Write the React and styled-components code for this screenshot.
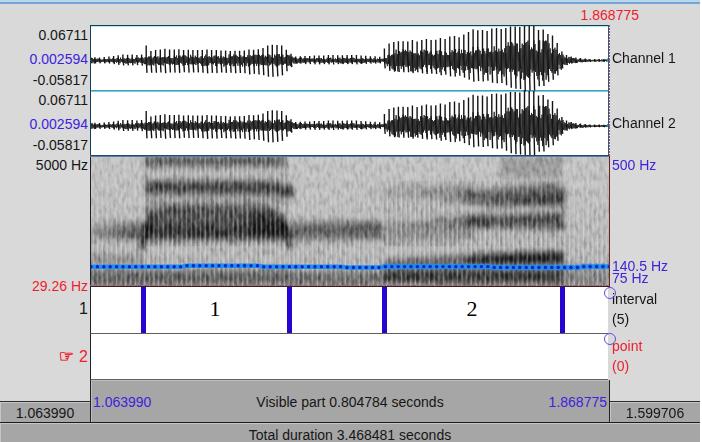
import React from 'react';
import styled, { createGlobalStyle } from 'styled-components';

const BLUE = '#3f22dc';
const RED = '#f01c2c';
const INK = '#161616';

const GlobalStyle = createGlobalStyle`
  body {
    margin: 0;
    background: #fff;
    font-family: 'Liberation Sans', Arial, sans-serif;
    font-size: 14px;
    color: ${INK};
  }
`;

const Window = styled.div`
  width: 700px;
  height: 442px;
  display: flex;
  flex-direction: column;
  overflow: hidden;
  background: #d9d9d9;
`;

const TitleEdge = styled.div`
  box-sizing: border-box;
  height: 4px;
  flex: none;
  background: #b9d6ef;
  border-bottom: 2px solid #76a5d4;
`;

const Header = styled.div`
  height: 21px;
  flex: none;
  display: flex;
  justify-content: flex-end;
  padding-right: 61px;
  line-height: 22px;
  color: ${RED};
`;

const Body = styled.div`
  display: grid;
  grid-template-columns: 90px 520px 90px;
  grid-template-rows: 398px;
  height: 398px;
  flex: none;
`;

const Side = styled.div`
  display: flex;
  flex-direction: column;
  text-align: ${p => p.right ? 'left' : 'right'};
  position: relative;
  z-index: 1;
`;

const Labels = styled.div`
  flex: 1;
  min-height: 0;
  padding: ${p => p.right ? '0 0 0 2px' : '0 2px 0 0'};
`;

const Label = styled.div`
  height: 10px;
  line-height: 10px;
  margin-top: ${p => p.gap}px;
  color: ${p => p.c || INK};
  font-size: ${p => p.big ? 16 : 14}px;
  white-space: nowrap;
`;

const Hand = styled.span`
  font-family: 'DejaVu Sans', sans-serif;
  font-size: 17px;
  line-height: 10px;
  margin-right: 5px;
  -webkit-text-stroke: 0.5px ${RED};
`;

const TimeBox = styled.div`
  box-sizing: border-box;
  height: 22px;
  flex: none;
  background: #a6a6a6;
  border-top: 1px solid #2c2c2c;
  border-bottom: 1px solid #1c1c1c;
  box-shadow: inset 1px 1px 0 #c6c6c6;
  line-height: 22px;
  text-align: center;
`;

const Plots = styled.div`
  display: flex;
  flex-direction: column;
`;

const Wave = styled.div`
  height: 131px;
  flex: none;
  background: #fff;

  svg { display: block; }
`;

const Spectrum = styled.div`
  height: 131px;
  flex: none;

  svg { display: block; }
`;

const Tier = styled.div`
  box-sizing: border-box;
  height: ${p => p.h}px;
  width: 518px;
  flex: none;
  display: flex;
  background: #fff;
  border-left: 1px solid #222;
  border-bottom: 1px solid #606060;
`;

const Interval = styled.div`
  box-sizing: border-box;
  width: ${p => p.w}px;
  flex: none;
  border-right: ${p => p.last ? 'none' : '5px solid #2605d2'};
  padding-right: ${p => p.last ? 0 : 3}px;
  text-align: center;
  font-family: 'Liberation Serif', 'Times New Roman', serif;
  font-size: 22px;
  line-height: 43px;
  color: #000;
`;

const Visible = styled.div`
  box-sizing: border-box;
  height: 43px;
  flex: none;
  display: grid;
  grid-template-columns: 1fr auto 1fr;
  padding: 2px 2px 0 2px;
  background: #a6a6a6;
  border-left: 1px solid #222;
  border-right: 1px solid #222;
  border-bottom: 1px solid #1c1c1c;
  box-shadow: inset 1px 1px 0 #bdbdbd;
  line-height: 40px;
`;

const Stamp = styled.span`
  color: ${BLUE};
  text-align: ${p => p.end ? 'right' : 'left'};
`;

const Total = styled.div`
  flex: 1;
  background: #a6a6a6;
  box-shadow: inset 1px 1px 0 #c6c6c6;
  line-height: 25px;
  text-align: center;
`;

const Handle = styled.span`
  position: absolute;
  box-sizing: border-box;
  left: -6px;
  top: ${p => p.y}px;
  width: 12px;
  height: 12px;
  border: 1px solid #5b4cdc;
  border-radius: 50%;
`;

// x, upper spike, lower spike, body
const ENVELOPE = [
  [0, 4, 3, 3], [10, 3, 3, 2], [18, 4, 3, 2], [30, 6, 5, 3], [50, 6, 5, 3], [53, 7, 6, 4],
  [56, 16, 13, 6], [61, 10, 13, 5], [70, 12, 13, 5], [125, 11, 13, 6],
  [142, 10, 13, 6], [170, 12, 15, 6], [180, 16, 17, 6], [190, 16, 16, 7],
  [195, 13, 13, 6], [200, 8, 8, 4], [206, 4, 3, 3], [220, 5, 4, 2.4],
  [260, 6, 4, 3], [290, 4, 3, 2], [293, 10, 7, 4], [299, 18, 11, 10],
  [310, 20, 12, 11], [340, 22, 14, 11], [360, 24, 16, 12], [372, 26, 17, 12],
  [380, 31, 21, 13], [395, 32, 22, 14], [410, 34, 24, 16],
  [420, 35, 28, 19], [432, 36, 31, 20], [445, 35, 30, 20], [455, 31, 25, 19],
  [463, 26, 20, 13], [468, 17, 15, 9], [472, 9, 8, 6], [478, 5, 4, 3],
  [487, 3, 2, 2], [500, 1.6, 1.4, 1], [519, 1.2, 1, 1],
];

const PERIOD = 4.67;

const rand = n => {
  const s = Math.sin(n * 12.9898 + 4.1) * 43758.5453;
  return s - Math.floor(s);
};

const envelopeAt = x => {
  let i = 0;
  while (i < ENVELOPE.length - 2 && ENVELOPE[i + 1][0] < x) i++;
  const a = ENVELOPE[i];
  const b = ENVELOPE[i + 1];
  const t = Math.min(1, Math.max(0, (x - a[0]) / (b[0] - a[0])));
  return [1, 2, 3].map(k => a[k] + (b[k] - a[k]) * t);
};

const bodyPts = [];
const spikes = [];
for (let n = 0; n * PERIOD < 516; n++) {
  const x0 = n * PERIOD + 0.2;
  const [up, down, body] = envelopeAt(x0);
  const j = 0.9 + rand(n) * 0.1;
  for (let k = 0; k < 8; k++) {
    const amp = body * (0.4 + rand(n * 8 + k) * 0.65) * (k % 2 ? 1 : -1);
    bodyPts.push(`${(x0 + k * PERIOD / 8).toFixed(1)} ${amp.toFixed(1)}`);
  }
  spikes.push(`M${x0.toFixed(1)} 1V${(-up * j).toFixed(1)}`);
  spikes.push(`M${(x0 + 0.1).toFixed(1)} 0l.7 ${(down * j).toFixed(1)}`);
}
const bodyPath = 'M' + bodyPts.join('L');
const spikePath = spikes.join('');

const Waveforms = () => (
  <svg width="520" height="131" viewBox="0 0 520 131">
    <rect x="0" y="65" width="519" height="1.6" fill="#38a3bd" />
    <path d="M1 1.5H519" stroke="#aeeaf3" />
    {[35.5, 101].map(y => (
      <g key={y} transform={`translate(0 ${y})`} fill="none">
        <path d={bodyPath} stroke="#1c1c1c" strokeWidth="0.85" />
        <path d={spikePath} stroke="#141414" strokeWidth="1.4" />
        <circle cx="518.5" cy="-0.5" r="1.8" fill="#168fc1" />
      </g>
    ))}
    <path d="M0 .5H519" stroke="#16404c" />
    <path d="M.5 0V131" stroke="#123e5c" />
    <path d="M518.5 0V131" stroke="#1b6292" />
    <path d="M519.5 0V131" stroke="#bd4b50" strokeDasharray="2 1" />
    <path d="M0 130.5H519" stroke="#1f4a76" />
  </svg>
);

// polygon points, opacity, grows to the right
const BANDS = [
  ['0,66 54,66 54,84 0,84', 0.5, true],
  ['0,70 54,70 54,82 0,82', 0.2],
  ['0,98 54,100 54,108 0,108', 0.25],
  ['0,114 200,114 200,128 0,128', 0.46],
  ['54,0 196,0 196,10 54,10', 0.55],
  ['55,25 180,25 204,30 204,42 180,39 55,38', 0.68],
  ['57,53 80,49 175,49 196,60 198,84 57,84', 0.6],
  ['54,69 198,69 198,82 54,82', 0.45],
  ['160,57 185,57 197,68 197,82 160,80', 0.6],
  ['55,42 196,42 196,50 55,50', 0.12],
  ['200,67 290,65 294,83 200,83', 0.52],
  ['200,115 294,115 294,129 200,129', 0.36],
  ['270,30 384,28 384,46 270,42', 0.28, true],
  ['294,66 384,62 384,84 294,84', 0.22],
  ['325,61 400,58 400,72 325,70', 0.4, true],
  ['375,36 440,28 472,28 472,50 400,51 375,45', 0.4],
  ['350,39 476,34 476,49 350,49', 0.55, true],
  ['375,61 474,56 474,74 375,70', 0.6],
  ['294,105 350,101 430,96 472,96 472,108 294,110', 0.6],
  ['380,100 474,96 474,108 380,108', 0.8],
  ['294,113 474,113 474,127 294,127', 0.72],
  ['410,0 472,0 472,22 410,22', 0.2],
  ['474,108 519,112 519,128 474,128', 0.2],
];

const pitchY = x => {
  if (x < 93) return 110.8;
  if (x < 172) return 109.8;
  if (x < 250) return 110.7;
  if (x < 290) return 111.5;
  if (x < 397) return 110.6;
  if (x < 490) return 111.4;
  return 110.6;
};

const PITCH = Array.from({ length: 82 }, (_, i) => [i * 6.4 + 1, pitchY(i * 6.4)]);

const Spectrogram = () => (
  <svg width="520" height="131" viewBox="0 0 520 131">
    <defs>
      <filter id="soft" x="-5%" y="-5%" width="110%" height="110%">
        <feGaussianBlur stdDeviation="2 3.3" />
      </filter>
      <filter id="grain" x="0" y="0" width="100%" height="100%" colorInterpolationFilters="sRGB">
        <feTurbulence type="fractalNoise" baseFrequency="0.3 0.12" numOctaves="2" seed="7" />
        <feColorMatrix values="2 0 0 0 -0.4  2 0 0 0 -0.4  2 0 0 0 -0.4  0 0 0 0 1" />
      </filter>
      <linearGradient id="grow">
        <stop offset="0" stopColor="#000" stopOpacity="0.05" />
        <stop offset="1" stopColor="#000" />
      </linearGradient>
      <linearGradient id="pulse">
        <stop offset="0" stopColor="#000" stopOpacity="0.22" />
        <stop offset="0.35" stopColor="#000" stopOpacity="0.1" />
        <stop offset="0.65" stopColor="#fff" stopOpacity="0.34" />
        <stop offset="1" stopColor="#000" stopOpacity="0.22" />
      </linearGradient>
      <pattern id="pulses" width={PERIOD} height="131" patternUnits="userSpaceOnUse">
        <rect width={PERIOD} height="131" fill="url(#pulse)" />
      </pattern>
      <linearGradient id="fall" x1="0" y1="0" x2="0" y2="1">
        <stop offset="0" stopColor="#fff" stopOpacity="0.05" />
        <stop offset="0.4" stopColor="#fff" stopOpacity="0.35" />
        <stop offset="1" stopColor="#fff" stopOpacity="1" />
      </linearGradient>
      <mask id="fade"><rect width="520" height="131" fill="url(#fall)" /></mask>
      <clipPath id="frame"><rect width="519" height="131" /></clipPath>
    </defs>
    <g clipPath="url(#frame)">
      <rect width="520" height="131" fill="#c2c2c2" />
      <g filter="url(#soft)">
        <rect y="118" width="520" height="20" opacity="0.12" />
        {BANDS.map(([points, o, grow], i) => (
          <polygon key={i} points={points} opacity={o} fill={grow ? 'url(#grow)' : '#000'} />
        ))}
        <path d="M49 94L58 58L64 68L53 95Z" opacity="0.85" />
        <path d="M190 66L198 67L203 96L198 92Z" opacity="0.75" />
      </g>
      <rect width="520" height="131" fill="url(#pulses)" mask="url(#fade)" />
      <rect x="54" width="145" height="90" fill="url(#pulses)" opacity="0.7" />
      <rect x="294" y="25" width="180" height="65" fill="url(#pulses)" opacity="0.45" />
      <rect width="520" height="131" filter="url(#grain)" opacity="0.42" style={{ mixBlendMode: 'soft-light' }} />
    </g>
    <polyline points={PITCH.map(p => p.join(',')).join(' ')} fill="none" stroke="#2190f2" strokeWidth="4.4" />
    {PITCH.map(([x, y]) => (
      <g key={x}>
        {x > 290 && <circle cx={x} cy={y} r="3" fill="#2387ed" />}
        <circle cx={x} cy={y} r="1.7" fill="#0625cf" />
      </g>
    ))}
    <path d="M.5 0V131" stroke="#222" />
    <path d="M0 .5H519" stroke="#587d9d" />
    <path d="M519.5 0V131" stroke="#6b2328" />
    <path d="M0 129.5H519" stroke="#a75e62" strokeDasharray="2 1" />
    <path d="M0 130.5H520" stroke="#3b2023" />
  </svg>
);

const LEFT = [
  { gap: 5, text: '0.06711' },
  { gap: 14, text: '0.002594', c: BLUE },
  { gap: 11, text: '-0.05817' },
  { gap: 10, text: '0.06711' },
  { gap: 14, text: '0.002594', c: BLUE },
  { gap: 11, text: '-0.05817' },
  { gap: 10, text: '5000 Hz' },
  { gap: 111, text: '29.26 Hz', c: RED },
  { gap: 13, text: '1', big: true },
];

const RIGHT = [
  { gap: 28, text: 'Channel 1' },
  { gap: 55, text: 'Channel 2' },
  { gap: 32, text: '500 Hz', c: BLUE },
  { gap: 91, text: '140.5 Hz', c: BLUE },
  { gap: 2, text: '75 Hz', c: BLUE },
  { gap: 11, text: 'interval' },
  { gap: 10, text: '(5)' },
  { gap: 17, text: 'point', c: RED },
  { gap: 10, text: '(0)', c: RED },
];

const App = () => (
  <>
    <GlobalStyle />
    <Window>
      <TitleEdge />
      <Header>1.868775</Header>
      <Body>
        <Side>
          <Labels>
            {LEFT.map((l, i) => <Label key={i} gap={l.gap} c={l.c} big={l.big}>{l.text}</Label>)}
            <Label gap={37} c={RED} big><Hand>☞</Hand>2</Label>
          </Labels>
          <TimeBox>1.063990</TimeBox>
        </Side>
        <Plots>
          <Wave><Waveforms /></Wave>
          <Spectrum><Spectrogram /></Spectrum>
          <Tier h={47}>
            <Interval w={55} />
            <Interval w={146}>1</Interval>
            <Interval w={95} />
            <Interval w={178}>2</Interval>
            <Interval w={43} last />
          </Tier>
          <Tier h={46} />
          <Visible>
            <Stamp>1.063990</Stamp>
            <span>Visible part 0.804784 seconds</span>
            <Stamp end>1.868775</Stamp>
          </Visible>
        </Plots>
        <Side right>
          <Labels right>
            {RIGHT.map((l, i) => <Label key={i} gap={l.gap} c={l.c}>{l.text}</Label>)}
          </Labels>
          <TimeBox>1.599706</TimeBox>
          <Handle y={262} />
          <Handle y={308} />
        </Side>
      </Body>
      <Total>Total duration 3.468481 seconds</Total>
    </Window>
  </>
);

export default App;
